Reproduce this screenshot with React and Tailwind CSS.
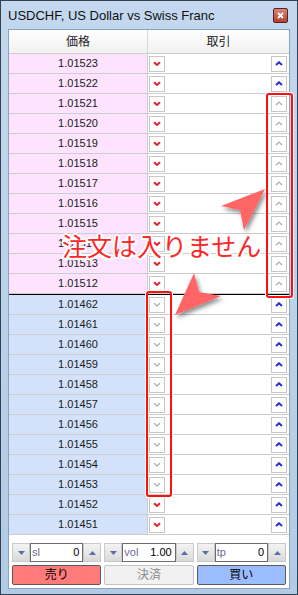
import React from 'react';

const sellPrices = ['1.01523', '1.01522', '1.01521', '1.01520', '1.01519', '1.01518', '1.01517', '1.01516', '1.01515', '1.01514', '1.01513', '1.01512'];
const buyPrices = ['1.01462', '1.01461', '1.01460', '1.01459', '1.01458', '1.01457', '1.01456', '1.01455', '1.01454', '1.01453', '1.01452', '1.01451'];

const Chevron = ({ dir, state }) => {
  const color = state === 'off' ? '#a3a3a3' : dir === 'down' ? '#e2202c' : '#2b2bd6';
  const pts = dir === 'down' ? '1,1.2 4,4 7,1.2' : '1,4 4,1.2 7,4';
  return (
    <svg width="8" height="5" viewBox="0 0 8 5">
      <polyline points={pts} fill="none" stroke={color} strokeWidth={state === 'off' ? 1.1 : 1.9} />
    </svg>
  );
};

const SmallBtn = ({ dir, state }) => (
  <div className="w-[16px] h-[16px] border border-[#c6c6c6] bg-white flex items-center justify-center">
    <Chevron dir={dir} state={state} />
  </div>
);

const Row = ({ price, side, downOff, upOff, top }) => (
  <div className={`flex h-[20px] border-b border-[#cdcdcd] ${top ? 'border-t border-t-black h-[21px]' : ''}`}>
    <div
      className={`w-[139px] border-r border-[#cdcdcd] flex items-center justify-center text-[11px] text-[#1a1a1a] ${
        side === 'sell' ? 'bg-[#fde3fd]' : 'bg-[#d3e2fa]'
      }`}
    >
      {price}
    </div>
    <div className="flex-1 flex items-center justify-between pl-[1px] pr-[2px] bg-white">
      <SmallBtn dir="down" state={downOff ? 'off' : 'on'} />
      <SmallBtn dir="up" state={upOff ? 'off' : 'on'} />
    </div>
  </div>
);

const Spin = ({ label, value }) => (
  <div className="flex h-[19px]">
    <div className="w-[18px] bg-gradient-to-b from-[#f4f4f4] to-[#d9d9d9] border border-[#c9c9c9] flex items-center justify-center">
      <svg width="7" height="4" viewBox="0 0 7 4">
        <polygon points="0,0 7,0 3.5,4" fill="#5870a8" />
      </svg>
    </div>
    <div className="flex-1 border border-[#6c6c6c] bg-white flex items-center justify-between px-[1px] text-[11px] leading-none">
      <span className="text-[#6a6a9c]">{label}</span>
      <span className="text-black pr-[2px]">{value}</span>
    </div>
    <div className="w-[18px] bg-gradient-to-b from-[#f4f4f4] to-[#d9d9d9] border border-[#c9c9c9] flex items-center justify-center">
      <svg width="7" height="4" viewBox="0 0 7 4">
        <polygon points="0,4 7,4 3.5,0" fill="#5870a8" />
      </svg>
    </div>
  </div>
);

export default function App() {
  return (
    <div className="relative w-[298px] h-[595px] overflow-hidden bg-gradient-to-b from-[#c3d8ee] to-[#b1cbe6] border border-[#34414f] font-['Liberation_Sans','Noto_Sans_CJK_JP',sans-serif]">
      <div className="h-[28px] flex items-center justify-between pl-[7px] pr-[9px]">
        <span className="text-[13px] text-[#101010] pt-[1px]">USDCHF, US Dollar vs Swiss Franc</span>
        <div className="w-[15px] h-[15px] rounded-[2px] border border-[#5a2020] bg-gradient-to-b from-[#d88676] to-[#b23f2c] flex items-center justify-center">
          <svg width="7" height="7" viewBox="0 0 7 7">
            <path d="M1 1L6 6M6 1L1 6" stroke="white" strokeWidth="1.8" />
          </svg>
        </div>
      </div>

      <div className="mx-[7px] border border-[#8ea3b9] bg-white flex flex-col">
        <div className="flex h-[24px] border-b border-[#cdcdcd] bg-gradient-to-b from-white to-[#f1f1f1] text-[12px] text-[#222]">
          <div className="w-[139px] border-r border-[#d8d8d8] flex items-center justify-center">価格</div>
          <div className="flex-1 flex items-center justify-center">取引</div>
        </div>
        {sellPrices.map((p, i) => (
          <Row key={p} price={p} side="sell" downOff={false} upOff={i >= 2} />
        ))}
        {buyPrices.map((p, i) => (
          <Row key={p} price={p} side="buy" downOff={i < 10} upOff={false} top={i === 0} />
        ))}
        <div className="flex flex-col gap-[3px] px-[3px] pt-[8px] pb-[3px]">
          <div className="grid grid-cols-3 gap-[3px]">
            <Spin label="sl" value="0" />
            <Spin label="vol" value="1.00" />
            <Spin label="tp" value="0" />
          </div>
          <div className="grid grid-cols-3 gap-[3px] text-[12px]">
            <div className="h-[20px] rounded-[2px] border border-[#5b5b5b] bg-[#ff7a7a] flex items-center justify-center text-black">売り</div>
            <div className="h-[20px] rounded-[2px] border border-[#c4c4c4] bg-[#f1f1f1] flex items-center justify-center text-[#8a8a8a]">決済</div>
            <div className="h-[20px] rounded-[2px] border border-[#5b5b5b] bg-[#9bbcff] flex items-center justify-center text-black">買い</div>
          </div>
        </div>
      </div>

      {/* annotations */}
      <div className="absolute left-[265px] top-[92px] w-[27px] h-[205px] border-2 border-[#ff1010] rounded-[3px] shadow-[0_0_0_1px_white]" />
      <div className="absolute left-[145px] top-[290px] w-[26px] h-[206px] border-2 border-[#ff1010] rounded-[3px] shadow-[0_0_0_1px_white]" />
      <svg className="absolute left-0 top-0" width="298" height="595" viewBox="0 0 298 595">
        <defs>
          <filter id="sh" x="-30%" y="-30%" width="160%" height="160%">
            <feDropShadow dx="2" dy="3" stdDeviation="2" floodColor="#000" floodOpacity="0.45" />
          </filter>
        </defs>
        <polygon points="264,188 220,205 239,209 243,229" fill="#ff6565" filter="url(#sh)" />
        <polygon points="193,272 198,291 220,295 174,314" fill="#ff6565" filter="url(#sh)" />
      </svg>
      <div className="absolute left-[61px] top-[230px] text-[25px] leading-[28px] text-[#ff2626] font-['Noto_Sans_CJK_JP',sans-serif] [text-shadow:2px_0_0_#fff,-2px_0_0_#fff,0_2px_0_#fff,0_-2px_0_#fff,1.5px_1.5px_0_#fff,-1.5px_-1.5px_0_#fff,1.5px_-1.5px_0_#fff,-1.5px_1.5px_0_#fff]">
        注文は入りません
      </div>
    </div>
  );
}
